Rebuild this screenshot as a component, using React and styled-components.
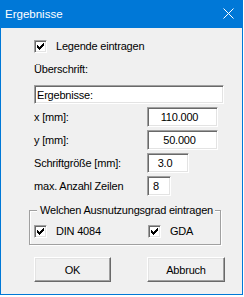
import React from "react";
import styled, { createGlobalStyle } from "styled-components";

const Global = createGlobalStyle`
  html, body { margin: 0; padding: 0; background: #ffffff; }
  * { box-sizing: border-box; }
`;

const Window = styled.div`
  width: 243px;
  height: 295px;
  border: 1px solid #0078d7;
  display: flex;
  flex-direction: column;
  font-family: "Liberation Sans", Arial, sans-serif;
  font-size: 11px;
  letter-spacing: -0.2px;
  color: #000;
`;

const TitleBar = styled.div`
  height: 27px;
  background: #0078d7;
  display: flex;
  align-items: center;
  justify-content: space-between;
  padding: 0 8px 2px 4px;
  color: #fff;
`;

const Title = styled.span`
  font-size: 11.5px;
  letter-spacing: 0;
`;

const CloseIcon = styled.svg`
  width: 11px;
  height: 11px;
`;

const Body = styled.div`
  flex: 1;
  background: #f0f0f0;
  padding: 12px 0 0 33px;
  display: flex;
  flex-direction: column;
  align-items: flex-start;
`;

const CheckRow = styled.label`
  display: flex;
  align-items: center;
  gap: 9px;
  height: 13px;
  line-height: 13px;
`;

const Box = styled.span`
  width: 13px;
  height: 13px;
  background: #fff;
  border: 1px solid;
  border-color: #a0a0a0 #fff #fff #a0a0a0;
  box-shadow: inset 1px 1px #696969, inset -1px -1px #e3e3e3;
  display: flex;
  align-items: center;
  justify-content: center;
  flex: none;
`;

const checkCols = [3, 4, 5, 4, 3, 2, 1];

function CheckBox() {
  return (
    <Box>
      <svg width="9" height="9" viewBox="0 0 9 9" shapeRendering="crispEdges">
        <path
          d={checkCols.map((r, i) => `M${i + 1} ${r}h1v3h-1z`).join("")}
          fill="#000"
        />
      </svg>
    </Box>
  );
}

const Caption = styled.div`
  line-height: 13px;
  margin-top: 10px;
`;

const Field = styled.div`
  width: ${(p) => p.$w}px;
  height: ${(p) => p.$h || 20}px;
  background: #fff;
  border: 1px solid;
  border-color: #a0a0a0 #fff #fff #a0a0a0;
  box-shadow: inset 1px 1px #696969, inset -1px -1px #e3e3e3;
  display: flex;
  align-items: center;
  justify-content: ${(p) => (p.$center ? "center" : "flex-start")};
  padding: ${(p) => (p.$center ? "0 6px 0 0" : "0 0 0 2px")};
  white-space: nowrap;
`;

const WideField = styled(Field)`
  margin-top: 9px;
`;

const Grid = styled.div`
  display: grid;
  grid-template-columns: 113px auto;
  grid-auto-rows: 20px;
  row-gap: 3px;
  margin-top: 3px;
  align-items: center;
`;

const Group = styled.div`
  position: relative;
  margin: 14px 0 0 -5px;
  width: 192px;
  height: 35px;
  border: 1px solid #a0a0a0;
  box-shadow: inset 1px 1px #fff, 1px 1px #fff;
  padding: 14px 0 0 4px;
  display: grid;
  grid-template-columns: 114px auto;
`;

const Legend = styled.span`
  position: absolute;
  top: -7px;
  left: 7px;
  padding: 0 2px 0 3px;
  background: #f0f0f0;
  line-height: 13px;
`;

const Buttons = styled.div`
  display: flex;
  gap: 36px;
  margin-top: 12px;
`;

const Button = styled.div`
  width: ${(p) => p.$w}px;
  height: 25px;
  background: #f0f0f0;
  border: 1px solid;
  border-color: #fff #696969 #696969 #fff;
  box-shadow: inset -1px -1px #a0a0a0, inset 1px 1px #e3e3e3;
  display: flex;
  align-items: center;
  justify-content: center;
`;

export default function App() {
  return (
    <>
      <Global />
      <Window>
        <TitleBar>
          <Title>Ergebnisse</Title>
          <CloseIcon viewBox="0 0 11 11">
            <path d="M0.5 0.5L10.5 10.5M10.5 0.5L0.5 10.5" stroke="#fff" strokeWidth="1" />
          </CloseIcon>
        </TitleBar>
        <Body>
          <CheckRow>
            <CheckBox />
            Legende eintragen
          </CheckRow>
          <Caption>Überschrift:</Caption>
          <WideField $w={190} $h={19}>Ergebnisse:</WideField>
          <Grid>
            <span>x [mm]:</span>
            <Field $w={71} $center>110.000</Field>
            <span>y [mm]:</span>
            <Field $w={71} $center>50.000</Field>
            <span>Schriftgröße [mm]:</span>
            <Field $w={42} $center>3.0</Field>
            <span>max. Anzahl Zeilen</span>
            <Field $w={24} $center>8</Field>
          </Grid>
          <Group>
            <Legend>Welchen Ausnutzungsgrad eintragen</Legend>
            <CheckRow>
              <CheckBox />
              DIN 4084
            </CheckRow>
            <CheckRow>
              <CheckBox />
              GDA
            </CheckRow>
          </Group>
          <Buttons>
            <Button $w={77}>OK</Button>
            <Button $w={78}>Abbruch</Button>
          </Buttons>
        </Body>
      </Window>
    </>
  );
}
